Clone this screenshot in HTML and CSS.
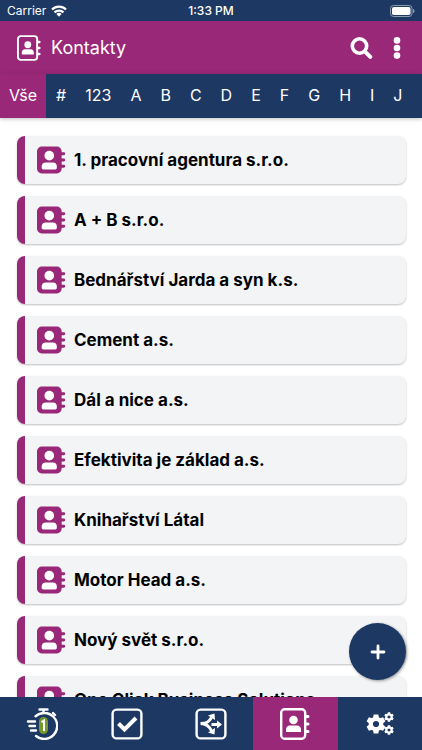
FILE: index.html
```html
<!DOCTYPE html>
<html lang="cs">
<head>
    <meta charset="UTF-8">
    <meta name="viewport" content="width=device-width, initial-scale=1.0">
    <title>Kontakty</title>
    <link rel="stylesheet" href="styles.css">
</head>
<body>
    <!-- Shared icons -->
    <svg class="icon-defs" aria-hidden="true">
        <symbol id="icon-contact" viewBox="0 0 30 30">
            <path fill="currentColor" d="M5 1h15.500a5 5 0 0 1 5 5v1h2.200a1.200 1.200 0 0 1 0 3h-2.200v3.500h2.200a1.200 1.200 0 0 1 0 3h-2.200v3.500h2.200a1.200 1.200 0 0 1 0 3h-2.200v1a5 5 0 0 1-5 5H5a5 5 0 0 1-5-5V6a5 5 0 0 1 5-5z"/>
            <circle cx="12.700" cy="10.500" r="5" fill="#fff"/>
            <path fill="#fff" d="M9 17.500h7.500c2.500 0 4 1.500 4 4v1.500c0 1-.6 1.700-1.600 1.700H6.500c-1 0-1.600-.7-1.600-1.700v-1.500c0-2.500 1.600-4 4.100-4z"/>
        </symbol>
        <symbol id="icon-book" viewBox="0 0 30 32">
            <rect x="1.200" y="1.200" width="24" height="29.600" rx="3.500" fill="none" stroke="currentColor" stroke-width="2.400"/>
            <path fill="none" stroke="currentColor" stroke-width="3" stroke-linecap="round" d="M26 8.500h2M26 16h2M26 23.500h2"/>
            <circle cx="13.500" cy="12" r="4.300" fill="currentColor"/>
            <path fill="currentColor" d="M10 17.500h7c2.500 0 4 1.700 4 4V24H6v-2.500c0-2.300 1.500-4 4-4z"/>
        </symbol>
        <symbol id="icon-cog" viewBox="-10 -10 20 20">
            <circle r="5.200" fill="none" stroke="currentColor" stroke-width="4.200"/>
            <g fill="currentColor">
                <path id="cog-teeth" d="M-2.300-9.500h4.600l.8 4h-6.200zM-2.300 9.500h4.600l.8-4h-6.200z"/>
                <use href="#cog-teeth" transform="rotate(60)"/>
                <use href="#cog-teeth" transform="rotate(120)"/>
            </g>
        </symbol>
    </svg>

    <div class="app">
        <div class="status-bar">
            <div class="carrier">
                <span>Carrier</span>
                <svg width="16" height="12" viewBox="0 0 16 12" aria-hidden="true">
                    <path fill="none" stroke="#fff" stroke-width="2.200" d="M1 4.500a10 10 0 0 1 14 0M3.500 7.400a6.400 6.400 0 0 1 9 0"/>
                    <path fill="#fff" d="M8 11.700 5.400 9a3.700 3.700 0 0 1 5.200 0z"/>
                </svg>
            </div>
            <span class="clock">1:33 PM</span>
            <div class="battery">
                <svg width="25" height="12" viewBox="0 0 25 12" aria-hidden="true">
                    <rect x=".5" y=".5" width="21.500" height="11" rx="3" fill="none" stroke="#8d9cb2"/>
                    <rect x="2" y="2" width="18.500" height="8" rx="1.800" fill="#fff"/>
                    <path fill="#8d9cb2" d="M23 4c2 .6 2 3.400 0 4z"/>
                </svg>
            </div>
        </div>

        <header class="header">
            <svg class="header-icon" aria-hidden="true"><use href="#icon-book"/></svg>
            <h1>Kontakty</h1>
            <button class="header-button" aria-label="Hledat">
                <svg width="23" height="22" viewBox="0 0 23 22" aria-hidden="true">
                    <circle cx="9.500" cy="9" r="7.200" fill="none" stroke="#fff" stroke-width="3.600"/>
                    <path stroke="#fff" stroke-width="4" stroke-linecap="round" d="m15.300 14.800 5 5"/>
                </svg>
            </button>
            <button class="header-button" aria-label="Menu">
                <svg width="8" height="22" viewBox="0 0 8 22" aria-hidden="true">
                    <g fill="#fff"><circle cx="4" cy="3.400" r="3.300"/><circle cx="4" cy="11" r="3.300"/><circle cx="4" cy="18.600" r="3.300"/></g>
                </svg>
            </button>
        </header>

        <nav class="letters" aria-label="Filtr">
            <a class="active" href="#">Vše</a>
            <a href="#">#</a>
            <a href="#">123</a>
            <a href="#">A</a>
            <a href="#">B</a>
            <a href="#">C</a>
            <a href="#">D</a>
            <a href="#">E</a>
            <a href="#">F</a>
            <a href="#">G</a>
            <a href="#">H</a>
            <a href="#">I</a>
            <a href="#">J</a>
            <a href="#">K</a>
        </nav>

        <main class="content">
            <ul class="contacts">
                <li><a class="contact" href="#"><svg aria-hidden="true"><use href="#icon-contact"/></svg><span>1. pracovní agentura s.r.o.</span></a></li>
                <li><a class="contact" href="#"><svg aria-hidden="true"><use href="#icon-contact"/></svg><span>A + B s.r.o.</span></a></li>
                <li><a class="contact" href="#"><svg aria-hidden="true"><use href="#icon-contact"/></svg><span>Bednářství Jarda a syn k.s.</span></a></li>
                <li><a class="contact" href="#"><svg aria-hidden="true"><use href="#icon-contact"/></svg><span>Cement a.s.</span></a></li>
                <li><a class="contact" href="#"><svg aria-hidden="true"><use href="#icon-contact"/></svg><span>Dál a nice a.s.</span></a></li>
                <li><a class="contact" href="#"><svg aria-hidden="true"><use href="#icon-contact"/></svg><span>Efektivita je základ a.s.</span></a></li>
                <li><a class="contact" href="#"><svg aria-hidden="true"><use href="#icon-contact"/></svg><span>Knihařství Látal</span></a></li>
                <li><a class="contact" href="#"><svg aria-hidden="true"><use href="#icon-contact"/></svg><span>Motor Head a.s.</span></a></li>
                <li><a class="contact" href="#"><svg aria-hidden="true"><use href="#icon-contact"/></svg><span>Nový svět s.r.o.</span></a></li>
                <li><a class="contact" href="#"><svg aria-hidden="true"><use href="#icon-contact"/></svg><span>One Click Business Solutions</span></a></li>
            </ul>
        </main>

        <button class="add-button" aria-label="Přidat">
            <svg width="16" height="16" viewBox="0 0 16 16" aria-hidden="true">
                <path stroke="#fff" stroke-width="2.800" stroke-linecap="round" d="M8 2v12M2 8h12"/>
            </svg>
        </button>

        <nav class="tab-bar" aria-label="Hlavní menu">
            <a href="#" aria-label="Měření času">
                <svg width="32" height="32" viewBox="0 0 32 32" aria-hidden="true">
                    <g fill="none" stroke="#fff" stroke-width="2.400" stroke-linecap="round">
                        <path d="M9.500 8.300A13 13 0 1 1 10 28M13.500 1.500h8M17.500 2v3M27 5l2 2M2 13.500h7M3.500 18h5.500M5 22.500h5"/>
                    </g>
                    <rect x="13" y="9" width="9" height="17" rx="4.500" fill="#76982d"/>
                    <path fill="none" stroke="#fff" stroke-width="2" d="M15.500 14.200 18 12.600V23"/>
                </svg>
            </a>
            <a href="#" aria-label="Úkoly">
                <svg width="32" height="32" viewBox="0 0 32 32" aria-hidden="true">
                    <rect x="1.600" y="1.600" width="28.800" height="28.800" rx="4" fill="none" stroke="#fff" stroke-width="2.400"/>
                    <path fill="none" stroke="#fff" stroke-width="4" d="m7.500 15.500 6 6L25 10"/>
                </svg>
            </a>
            <a href="#" aria-label="Příležitosti">
                <svg width="32" height="32" viewBox="0 0 32 32" aria-hidden="true">
                    <rect x="1.600" y="1.600" width="28.800" height="28.800" rx="4" fill="none" stroke="#fff" stroke-width="2.400"/>
                    <path fill="none" stroke="#fff" stroke-width="3" d="M5.500 15.500c6 0 8.500-1.500 11-6M5.500 15.500c6 0 9 3 11 7.500M16.500 16.500H23"/>
                    <path fill="#fff" d="m13 7.500 6.500-2 .5 6.500zM22 12.500l5 4-5 4zM20 20l-.5 6.500-6.500-2z"/>
                </svg>
            </a>
            <a class="active" href="#" aria-label="Kontakty">
                <svg width="30" height="32" aria-hidden="true"><use href="#icon-book"/></svg>
            </a>
            <a href="#" aria-label="Nastavení">
                <svg width="28" height="24" viewBox="0 0 28 24" aria-hidden="true">
                    <use href="#icon-cog" x="0" y="2" width="20" height="20"/>
                    <use href="#icon-cog" x="18" y="0" width="10" height="10"/>
                    <use href="#icon-cog" x="18" y="13" width="10" height="10"/>
                </svg>
            </a>
        </nav>
    </div>
</body>
</html>
```

FILE: styles.css
```css
* {
    box-sizing: border-box;
}
body {
    margin: 0;
    background-color: #fff;
    color: #000;
    font-family: Inter, "Liberation Sans", sans-serif;
}
a {
    color: inherit;
    text-decoration: none;
}
button {
    padding: 0;
    border: none;
    background: none;
    cursor: pointer;
}
svg {
    display: block;
    flex-shrink: 0;
}
.icon-defs {
    position: absolute;
    width: 0;
    height: 0;
}
.app {
    position: relative;
    display: flex;
    flex-direction: column;
    height: 100vh;
}

/* Status bar */
.status-bar {
    display: flex;
    align-items: center;
    height: 21px;
    padding: 0 7px;
    background-color: #1d3863;
    color: #fff;
    font-size: 12px;
}
.carrier, .battery {
    display: flex;
    flex: 1;
    align-items: center;
    gap: 5px;
}
.battery {
    justify-content: flex-end;
}
.clock {
    font-weight: 500;
}

/* Header */
.header {
    display: flex;
    align-items: center;
    gap: 20px;
    height: 53px;
    padding: 0 21px 0 17px;
    background-color: #992878;
    color: #fff;
}
.header-icon {
    width: 24px;
    height: 26px;
}
.header h1 {
    flex: 1;
    margin: 0 0 0 -10px;
    font-size: 18px;
    font-weight: 400;
}

/* Letter filter */
.letters {
    position: relative;
    display: flex;
    flex-shrink: 0;
    gap: 1px;
    height: 44px;
    overflow: hidden;
    background-color: #1d3863;
    box-shadow: 0 1px 4px rgba(0,0,0,0.25);
    color: #fff;
    font-size: 16px;
}
.letters a {
    display: flex;
    flex-shrink: 0;
    align-items: center;
    padding: 0 9px 2px;
}
.letters .active {
    background-color: #992878;
}

/* Contact list */
.content {
    flex: 1;
    min-height: 0;
    overflow: hidden;
}
.contacts {
    display: flex;
    flex-direction: column;
    gap: 12px;
    margin: 0;
    padding: 18px 16px 18px 17px;
    list-style: none;
}
.contact {
    display: flex;
    align-items: center;
    gap: 8px;
    height: 48px;
    padding-left: 12px;
    border-left: 8px solid #992878;
    border-radius: 8px;
    background-color: #f3f4f6;
    box-shadow: 0 1px 2px rgba(0,0,0,0.25);
    font-size: 17px;
    font-weight: 700;
}
.contact svg {
    width: 29px;
    height: 30px;
    color: #992878;
}

/* Floating button */
.add-button {
    position: absolute;
    right: 16px;
    bottom: 70px;
    display: flex;
    align-items: center;
    justify-content: center;
    width: 57px;
    height: 57px;
    border-radius: 50%;
    background-color: #1d3863;
    box-shadow: 1px 1px 3px rgba(0,0,0,0.4);
}

/* Bottom tabs */
.tab-bar {
    display: flex;
    flex-shrink: 0;
    height: 53px;
    background-color: #1d3863;
    color: #fff;
}
.tab-bar a {
    display: flex;
    flex: 1;
    align-items: center;
    justify-content: center;
}
.tab-bar .active {
    background-color: #992878;
}
```
